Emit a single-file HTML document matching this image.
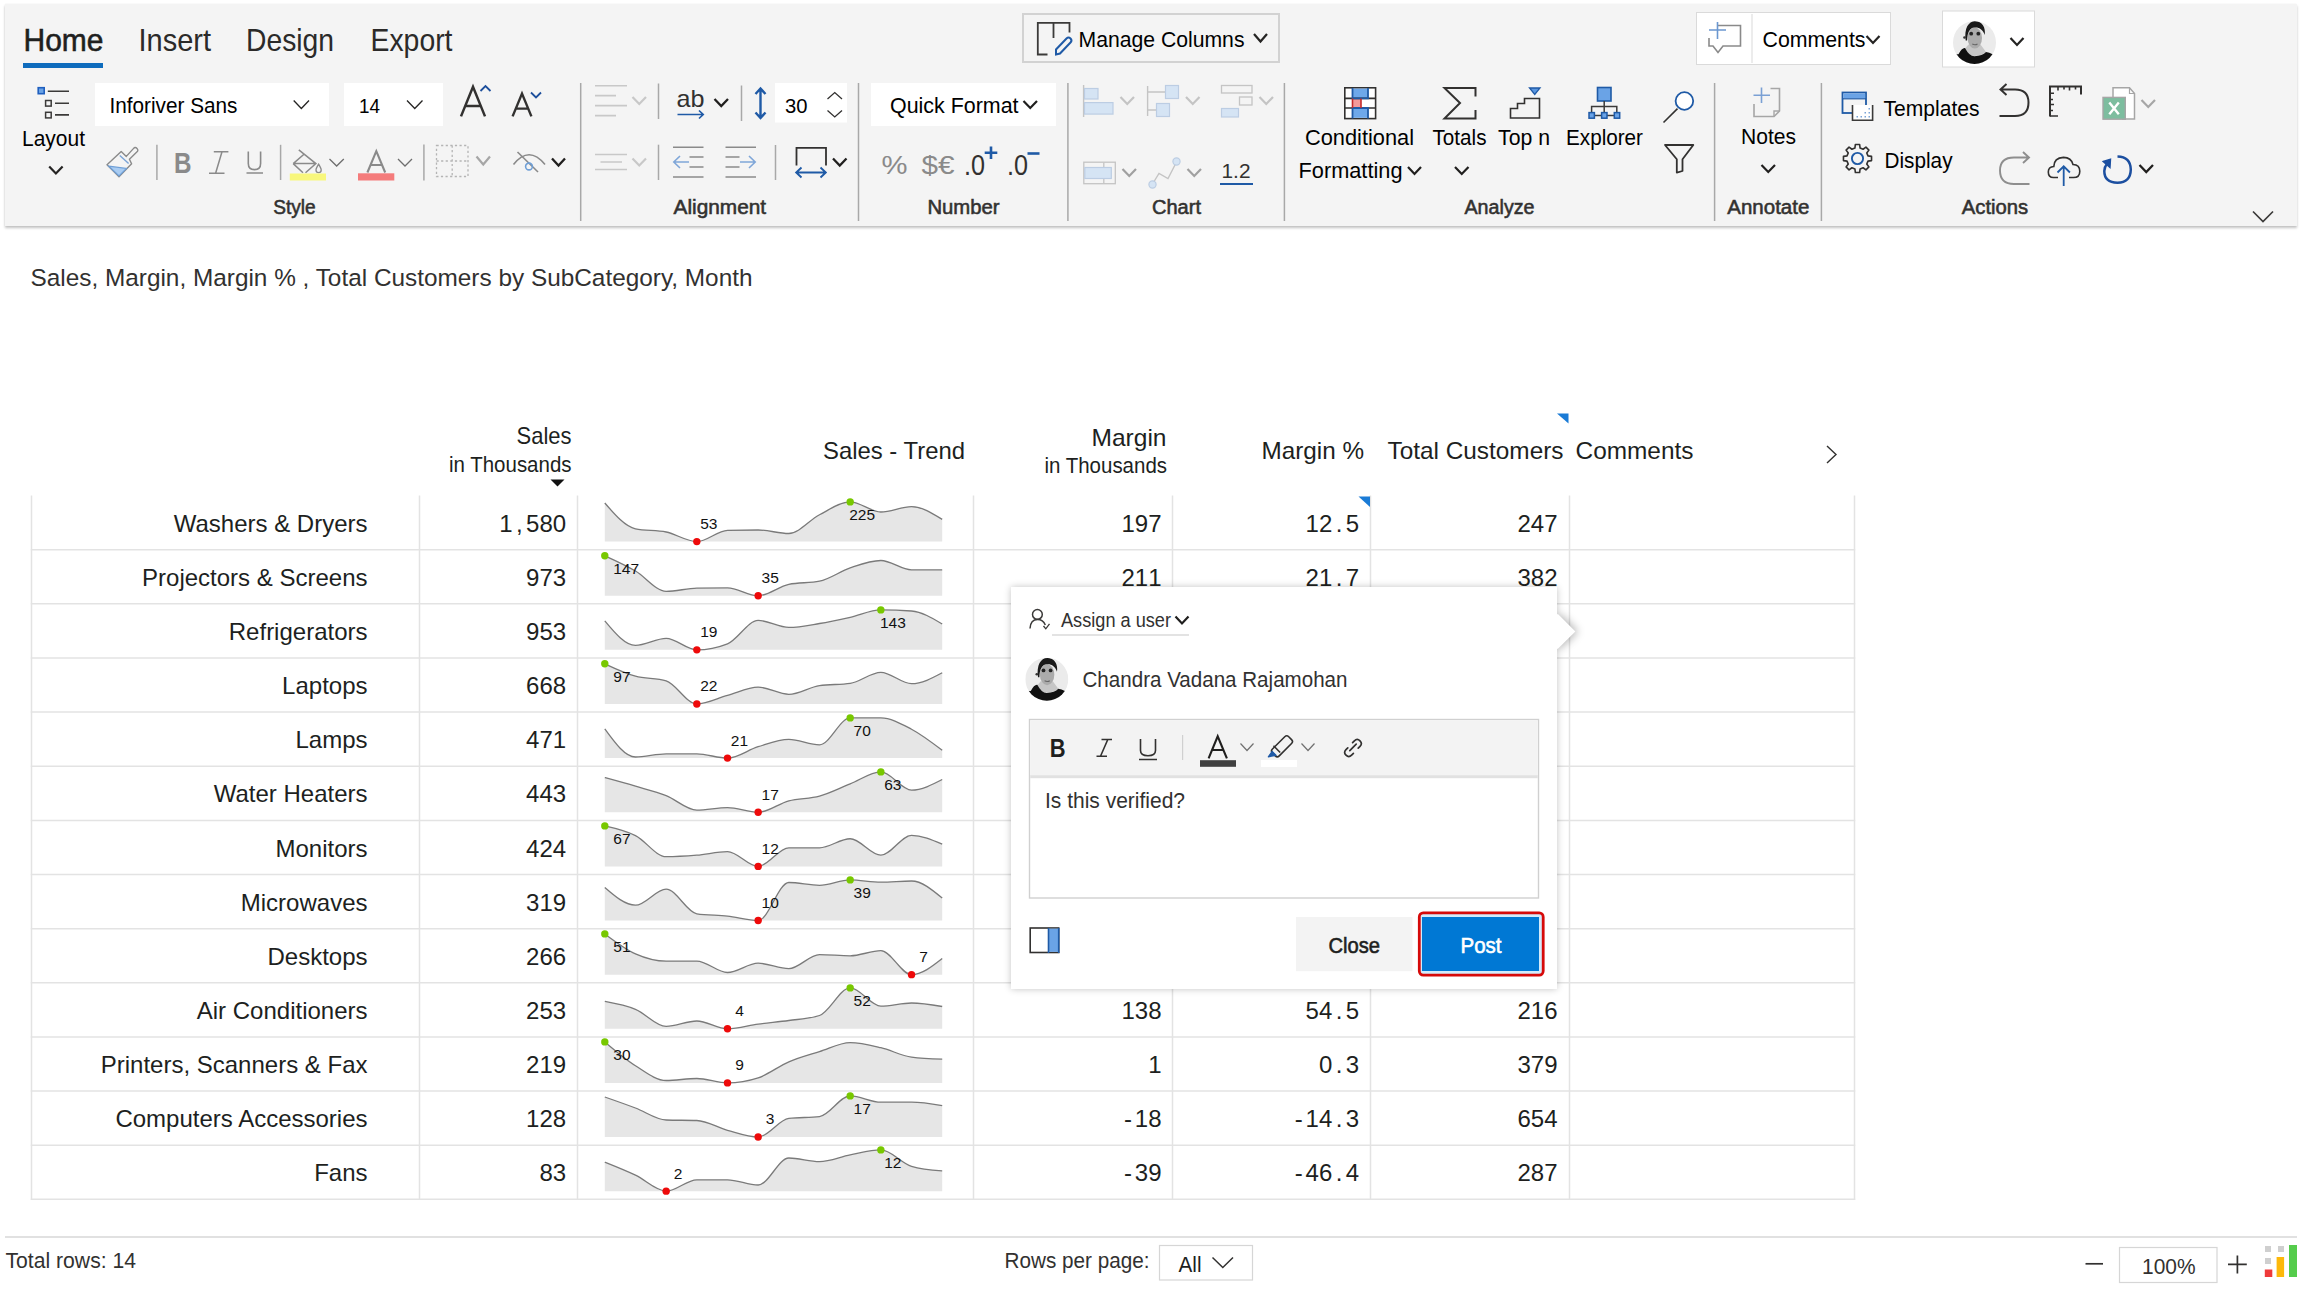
<!DOCTYPE html><html><head><meta charset="utf-8"><title>Inforiver</title><style>
html,body{margin:0;padding:0;background:#fff;width:2304px;height:1292px;overflow:hidden}
svg{position:absolute;left:0;top:0;overflow:visible}
text{font-family:"Liberation Sans",sans-serif}
text.m{font-family:"Liberation Mono",monospace}
.rib{position:absolute;left:5px;top:4px;width:2292px;height:222px;background:#f4f4f4;box-shadow:0 1.5px 2.5px rgba(0,0,0,0.24),-0.5px 0 1.5px rgba(0,0,0,0.07)}
.pop{position:absolute;left:1011px;top:586.5px;width:546px;height:402.5px;background:#fff;box-shadow:0 0 7px rgba(0,0,0,0.24)}
.arrw{position:absolute;left:1557px;top:596px;width:40px;height:72px;overflow:hidden}.arr{position:absolute;left:-11.9px;top:23px;width:25.4px;height:25.4px;background:#fff;transform:rotate(45deg);box-shadow:2px -2px 8px rgba(0,0,0,0.28)}
.lbl{paint-order:stroke;stroke:rgba(255,255,255,0.55);stroke-width:1.5px}
</style></head><body>
<div class="rib"></div>
<svg width="2304" height="1292" viewBox="0 0 2304 1292">
<text class="s" x="23.5" y="51.4" font-size="30.5" fill="#201f1e" textLength="80" lengthAdjust="spacingAndGlyphs" stroke="#201f1e" stroke-width="0.55">Home</text>
<rect x="23" y="63" width="80" height="5" fill="#0f6cbd"/>
<text class="s" x="138.5" y="51.4" font-size="30.5" fill="#2b2a29" textLength="72.5" lengthAdjust="spacingAndGlyphs">Insert</text>
<text class="s" x="246" y="51.4" font-size="30.5" fill="#2b2a29" textLength="88" lengthAdjust="spacingAndGlyphs">Design</text>
<text class="s" x="370.5" y="51.4" font-size="30.5" fill="#2b2a29" textLength="82" lengthAdjust="spacingAndGlyphs">Export</text>
<rect x="1023" y="14" width="256" height="48" fill="none" stroke="#d2d2d2" stroke-width="2"/>
<path d="M1047.5 54.5H1037.8V22.8H1069.5V32.5M1053.5 22.8V38" fill="none" stroke="#3b3a39" stroke-width="1.8"/>
<path d="M1056 54.5L1056 49.5L1066.5 38.5Q1068.5 36.5 1070.5 38.5Q1072.5 40.5 1070.5 42.5L1060 53.5Z" fill="none" stroke="#1f5aa6" stroke-width="2"/>
<text class="s" x="1078.5" y="46.5" font-size="21.5" textLength="166" lengthAdjust="spacingAndGlyphs">Manage Columns</text>
<path d="M1254 34L1260.5 41.5L1267 34" fill="none" stroke="#252423" stroke-width="2.2"/>
<rect x="1696.5" y="12.5" width="194" height="52" fill="#fff" stroke="#dadada" stroke-width="1"/>
<line x1="1752" y1="14" x2="1752" y2="63" stroke="#e0e0e0" stroke-width="1.2"/>
<path d="M1718 25.5H1740.5V46H1723L1718 52.5L1713 46H1709V38" fill="none" stroke="#8a8a8a" stroke-width="1.6"/>
<path d="M1709 30H1726M1717.5 22V39" fill="none" stroke="#6b97d0" stroke-width="1.6"/>
<text class="s" x="1762.5" y="47" font-size="21.5" textLength="103" lengthAdjust="spacingAndGlyphs">Comments</text>
<path d="M1866.5 36L1873.0 43L1879.5 36" fill="none" stroke="#252423" stroke-width="2.2"/>
<rect x="1942.5" y="11" width="92" height="56" fill="#fff" stroke="#dadada" stroke-width="1"/>
<clipPath id="av1"><circle cx="1974.5" cy="42.5" r="21.5"/></clipPath>
<g clip-path="url(#av1)">
<rect x="1953.0" y="21.0" width="43.0" height="43.0" fill="#ebebeb"/>
<path d="M1965.00 48.50Q1969.50 56.50 1974.50 56.00Q1982.50 55.50 1986.00 52.00L1980.50 44.50L1968.50 44.50Z" fill="#c6c6c6"/>
<path d="M1950.50 54.50L1958.50 54.20Q1962.00 47.50 1965.00 48.00Q1969.50 56.50 1974.50 56.30Q1982.50 55.70 1986.00 52.00Q1989.50 52.50 1992.00 54.00L1998.50 56.50L1998.50 72.50L1950.50 72.50Z" fill="#101010"/>
<ellipse cx="1974.80" cy="38.00" rx="7.20" ry="10.50" fill="#ababab"/>
<path d="M1965.70 40.50C1964.00 28.50 1968.50 21.30 1975.00 21.30C1982.00 21.30 1986.00 27.50 1984.70 35.00C1983.00 29.50 1979.00 27.00 1974.50 27.50C1969.50 28.00 1967.30 32.50 1967.10 40.50Z" fill="#1a1a1a"/>
<circle cx="1971.20" cy="33.70" r="1.90" fill="#242424"/>
<circle cx="1978.30" cy="33.70" r="1.90" fill="#242424"/>
<circle cx="1964.50" cy="37.50" r="1.30" fill="#333"/>
<path d="M1972.30 44.00Q1975.00 45.50 1977.50 44.00" fill="none" stroke="#666" stroke-width="1.10"/>
</g>
<path d="M2010.5 38L2017.0 45L2023.5 38" fill="none" stroke="#252423" stroke-width="2.2"/>
<line x1="580.7" y1="83" x2="580.7" y2="221" stroke="#a8a8a8" stroke-width="1.5"/>
<line x1="858.5" y1="83" x2="858.5" y2="221" stroke="#a8a8a8" stroke-width="1.5"/>
<line x1="1067.9" y1="83" x2="1067.9" y2="221" stroke="#a8a8a8" stroke-width="1.5"/>
<line x1="1284.4" y1="83" x2="1284.4" y2="221" stroke="#a8a8a8" stroke-width="1.5"/>
<line x1="1714.6" y1="83" x2="1714.6" y2="221" stroke="#a8a8a8" stroke-width="1.5"/>
<line x1="1821.4" y1="83" x2="1821.4" y2="221" stroke="#a8a8a8" stroke-width="1.5"/>
<text class="s" x="294.5" y="214.1" font-size="20" fill="#323130" text-anchor="middle" textLength="42.5" lengthAdjust="spacingAndGlyphs" stroke="#323130" stroke-width="0.55">Style</text>
<text class="s" x="719.8" y="214.1" font-size="20" fill="#323130" text-anchor="middle" textLength="92.5" lengthAdjust="spacingAndGlyphs" stroke="#323130" stroke-width="0.55">Alignment</text>
<text class="s" x="963.5" y="214.1" font-size="20" fill="#323130" text-anchor="middle" textLength="72.2" lengthAdjust="spacingAndGlyphs" stroke="#323130" stroke-width="0.55">Number</text>
<text class="s" x="1176.5" y="214.1" font-size="20" fill="#323130" text-anchor="middle" textLength="49" lengthAdjust="spacingAndGlyphs" stroke="#323130" stroke-width="0.55">Chart</text>
<text class="s" x="1499.5" y="214.1" font-size="20" fill="#323130" text-anchor="middle" textLength="70" lengthAdjust="spacingAndGlyphs" stroke="#323130" stroke-width="0.55">Analyze</text>
<text class="s" x="1768.3" y="214.1" font-size="20" fill="#323130" text-anchor="middle" textLength="82" lengthAdjust="spacingAndGlyphs" stroke="#323130" stroke-width="0.55">Annotate</text>
<text class="s" x="1995" y="214.1" font-size="20" fill="#323130" text-anchor="middle" textLength="66.4" lengthAdjust="spacingAndGlyphs" stroke="#323130" stroke-width="0.55">Actions</text>
<path d="M2253 211.5L2263.0 221.5L2273 211.5" fill="none" stroke="#3b3a39" stroke-width="1.7"/>
<rect x="38.2" y="87.7" width="6" height="6" fill="#6aa3e6" stroke="#1f5fbf" stroke-width="1.6"/>
<path d="M47.8 91.2H69M55 103.2H69M55 114.9H69" stroke="#3b3a39" stroke-width="1.6"/>
<rect x="45.6" y="100.5" width="5.6" height="5.6" fill="none" stroke="#3b3a39" stroke-width="1.5"/>
<rect x="45.6" y="112.3" width="5.6" height="5.6" fill="none" stroke="#3b3a39" stroke-width="1.5"/>
<text class="s" x="22" y="145.5" font-size="21.5" textLength="63" lengthAdjust="spacingAndGlyphs">Layout</text>
<path d="M49.2 166.5L55.900000000000006 173.5L62.6 166.5" fill="none" stroke="#252423" stroke-width="2.2"/>
<rect x="95" y="83" width="234" height="43" fill="#fff"/>
<text class="s" x="109.5" y="112.7" font-size="21.5" textLength="128" lengthAdjust="spacingAndGlyphs">Inforiver Sans</text>
<path d="M293.7 100.5L301.35 108.5L309 100.5" fill="none" stroke="#252423" stroke-width="1.3"/>
<rect x="344" y="83" width="99" height="43" fill="#fff"/>
<text class="s" x="359" y="113" font-size="20.5" textLength="21" lengthAdjust="spacingAndGlyphs">14</text>
<path d="M407 100.5L414.75 108.5L422.5 100.5" fill="none" stroke="#252423" stroke-width="1.3"/>
<path d="M461 116.4L473 86.8L485 116.4M465.3 106H480.7" fill="none" stroke="#323130" stroke-width="2.5"/>
<path d="M480.5 91L485.5 86L490.5 91" fill="none" stroke="#1d4f9c" stroke-width="1.8"/>
<path d="M512.6 116.4L522 93.6L531.4 116.4M515.8 108.6H528.2" fill="none" stroke="#323130" stroke-width="2.4"/>
<path d="M531 92.5L536 97.5L541 92.5" fill="none" stroke="#1d4f9c" stroke-width="1.8"/>
<path d="M107 164.8L121.2 151.6L126.3 156.4L133.4 148.6Q135.2 146.6 137 148.4Q138.8 150.2 136.8 152L129.4 159.2L131.6 163.8L119 176.8Z" fill="none" stroke="#8a8a8a" stroke-width="1.4" stroke-linejoin="round"/>
<path d="M108.8 166.2L126.5 168.4L119 176Z" fill="#a9ccf2" stroke="#6f9fd6" stroke-width="1.2"/>
<path d="M119.8 155.4L128.6 163.6" stroke="#7aa3d6" stroke-width="1.4"/>
<line x1="156.9" y1="144.8" x2="156.9" y2="180" stroke="#a8a8a8" stroke-width="1.5"/>
<text class="s" x="174" y="173" font-size="29.5" fill="#8a8a8a" font-weight="700" textLength="17.5" lengthAdjust="spacingAndGlyphs">B</text>
<path d="M213.8 151.8H228.4M209 173.2H224.5M222 151.8L215.6 173.2" fill="none" stroke="#8a8a8a" stroke-width="1.5"/>
<path d="M248.3 151.5V163.5Q248.3 169.6 254.5 169.6Q260.6 169.6 260.6 163.5V151.5M246.5 173H263" fill="none" stroke="#8a8a8a" stroke-width="1.6"/>
<line x1="280.6" y1="144.8" x2="280.6" y2="180" stroke="#a8a8a8" stroke-width="1.5"/>
<path d="M298.8 149.8L315.9 163.6L305.5 172.8M293.2 163.6L304 154.2M293.2 163.6L303 172.8M293.4 163.6H315.5" fill="none" stroke="#8a8a8a" stroke-width="1.5"/>
<path d="M318.6 164.2Q316 168.5 316 170Q316 172.6 318.6 172.6Q321.2 172.6 321.2 170Q321.2 168.5 318.6 164.2Z" fill="none" stroke="#8a8a8a" stroke-width="1.3"/>
<rect x="289.8" y="173.5" width="36.2" height="7" fill="#f8f77c"/>
<path d="M329.5 159L336.65 166L343.8 159" fill="none" stroke="#6e6e6e" stroke-width="1.3"/>
<path d="M367.4 172.5L376.3 151.2L385.2 172.5M370.6 165H382" fill="none" stroke="#8a8a8a" stroke-width="2.1"/>
<rect x="358" y="173.3" width="36.3" height="7.2" fill="#f47b7b"/>
<path d="M398 159L405.0 166L412 159" fill="none" stroke="#6e6e6e" stroke-width="1.3"/>
<line x1="423.9" y1="144.6" x2="423.9" y2="180.4" stroke="#a8a8a8" stroke-width="1.5"/>
<path d="M436.5 145.5H468V176.5H436.5ZM452.2 145.5V176.5M436.5 161H468" fill="none" stroke="#b4b4b4" stroke-width="1.3" stroke-dasharray="2.2 2.4"/>
<path d="M476.5 156.5L483.25 164.5L490 156.5" fill="none" stroke="#a6a6a6" stroke-width="2.2"/>
<path d="M513.5 164.5Q529 145 545 164.5" fill="none" stroke="#8a8a8a" stroke-width="1.6"/>
<path d="M517.5 152L538 172" stroke="#8a8a8a" stroke-width="1.6"/>
<circle cx="529" cy="166.5" r="3.4" fill="none" stroke="#6f9fd6" stroke-width="1.6"/>
<path d="M552 158.5L558.5 165.5L565 158.5" fill="none" stroke="#201f1e" stroke-width="2.3"/>
<path d="M595 85.8H627M595 95.6H616M595 105.6H627M595 115.6H616" stroke="#c8c8c8" stroke-width="1.6"/>
<path d="M632.5 97L639.25 104L646 97" fill="none" stroke="#c8c8c8" stroke-width="2.2"/>
<line x1="658.5" y1="83.5" x2="658.5" y2="119" stroke="#a8a8a8" stroke-width="1.5"/>
<text class="s" x="676.5" y="107" font-size="24" fill="#323130" textLength="28" lengthAdjust="spacingAndGlyphs">ab</text>
<path d="M677.5 114.5H703M699 110.5L703.2 114.5L699 118.5" fill="none" stroke="#1f5aa6" stroke-width="1.7"/>
<path d="M714.5 99L721.25 106L728 99" fill="none" stroke="#201f1e" stroke-width="2.3"/>
<line x1="741.5" y1="85.5" x2="741.5" y2="121" stroke="#a8a8a8" stroke-width="1.5"/>
<path d="M760.5 89V117.5M755.5 94L760.5 88.5L765.5 94M755.5 112.5L760.5 118L765.5 112.5" fill="none" stroke="#1f5aa6" stroke-width="2.4"/>
<rect x="775" y="83" width="72" height="39.5" fill="#fff"/>
<text class="s" x="785" y="112.5" font-size="20.5" textLength="22.5" lengthAdjust="spacingAndGlyphs">30</text>
<path d="M827.5 99L834.75 92.5L842 99" fill="none" stroke="#323130" stroke-width="1.3"/>
<path d="M827.5 110.5L834.75 117L842 110.5" fill="none" stroke="#323130" stroke-width="1.3"/>
<path d="M595 154.5H627M600.5 162H622M595 169.5H627" stroke="#c8c8c8" stroke-width="1.6"/>
<path d="M632.5 158.5L639.25 165.5L646 158.5" fill="none" stroke="#c8c8c8" stroke-width="2.2"/>
<line x1="658.5" y1="144.7" x2="658.5" y2="180" stroke="#a8a8a8" stroke-width="1.5"/>
<path d="M673 147.3H703.5M689.5 157H703.5M689.5 167H703.5M673 177H703.5" stroke="#8a8a8a" stroke-width="1.6"/>
<path d="M674 162H689M680 156L673.8 162L680 168" fill="none" stroke="#7fa6d8" stroke-width="1.6"/>
<path d="M725.5 147.3H756M725.5 157H739.5M725.5 167H739.5M725.5 177H756" stroke="#8a8a8a" stroke-width="1.6"/>
<path d="M740 162H755M749 156L755.2 162L749 168" fill="none" stroke="#7fa6d8" stroke-width="1.6"/>
<line x1="775.5" y1="145" x2="775.5" y2="180" stroke="#a8a8a8" stroke-width="1.5"/>
<path d="M796.5 165.5V147.8H826V165.5" fill="none" stroke="#323130" stroke-width="1.8"/>
<path d="M796.5 172.5H825.5M801.5 167.5L796.2 172.5L801.5 177.5M820.5 167.5L825.8 172.5L820.5 177.5" fill="none" stroke="#1f5aa6" stroke-width="1.9"/>
<path d="M833 158.5L839.75 165.5L846.5 158.5" fill="none" stroke="#201f1e" stroke-width="2.3"/>
<rect x="871" y="83" width="185" height="43" fill="#fff"/>
<text class="s" x="890" y="113.3" font-size="21.5" textLength="128.5" lengthAdjust="spacingAndGlyphs">Quick Format</text>
<path d="M1023.5 101L1030.25 108L1037 101" fill="none" stroke="#201f1e" stroke-width="2.2"/>
<text class="s" x="881.5" y="174" font-size="25" fill="#8a8a8a" textLength="26" lengthAdjust="spacingAndGlyphs">%</text>
<text class="s" x="921.5" y="174" font-size="26" fill="#8a8a8a" textLength="33" lengthAdjust="spacingAndGlyphs">$€</text>
<text class="s" x="964" y="175" font-size="29" fill="#323130" textLength="21" lengthAdjust="spacingAndGlyphs">.0</text>
<path d="M991 146.5V159M984.7 152.7H997.3" stroke="#1f5aa6" stroke-width="2.6"/>
<text class="s" x="1007" y="175" font-size="29" fill="#323130" textLength="21" lengthAdjust="spacingAndGlyphs">.0</text>
<path d="M1027.5 153.5H1039.5" stroke="#1f5aa6" stroke-width="2.6"/>
<path d="M1083.6 85V117" stroke="#c4c4c4" stroke-width="1.4"/>
<rect x="1084.5" y="88.5" width="13.5" height="10.5" fill="#d5e4f4" stroke="#bccde3" stroke-width="1.2"/>
<rect x="1084.5" y="102.6" width="28.5" height="11.5" fill="#d5e4f4" stroke="#bccde3" stroke-width="1.2"/>
<path d="M1120.5 97L1127.25 104L1134 97" fill="none" stroke="#c4c4c4" stroke-width="2.2"/>
<path d="M1147.6 86V116M1147.6 92H1165M1147.6 110H1156" fill="none" stroke="#c4c4c4" stroke-width="1.4"/>
<rect x="1165.5" y="85.5" width="13" height="13" fill="#d5e4f4" stroke="#bccde3" stroke-width="1.2"/>
<rect x="1156.5" y="103.5" width="13" height="13" fill="#d5e4f4" stroke="#bccde3" stroke-width="1.2"/>
<path d="M1186 97L1192.75 104L1199.5 97" fill="none" stroke="#c4c4c4" stroke-width="2.2"/>
<rect x="1221.5" y="85.5" width="30.5" height="7.5" fill="none" stroke="#c4c4c4" stroke-width="1.3"/>
<rect x="1239.5" y="97" width="12.5" height="8" fill="none" stroke="#c4c4c4" stroke-width="1.3"/>
<rect x="1221.5" y="108.5" width="17" height="8.5" fill="#d5e4f4" stroke="#bccde3" stroke-width="1.2"/>
<path d="M1259.5 97L1266.25 104L1273 97" fill="none" stroke="#c4c4c4" stroke-width="2.2"/>
<rect x="1083.8" y="162.2" width="31.5" height="21.5" fill="none" stroke="#c4c4c4" stroke-width="1.3"/>
<path d="M1103.8 162.5V183.5" stroke="#c4c4c4" stroke-width="1.3"/>
<rect x="1084.8" y="167.5" width="26.5" height="11" fill="#d5e4f4" stroke="#bccde3" stroke-width="1.2"/>
<path d="M1122.5 169L1129.25 176L1136 169" fill="none" stroke="#a0a0a0" stroke-width="2.2"/>
<path d="M1152.5 184L1159 173.5L1168 178.5L1176.5 162" fill="none" stroke="#c4c4c4" stroke-width="1.4"/>
<circle cx="1152.5" cy="184.5" r="3.6" fill="#d5e4f4" stroke="#bccde3" stroke-width="1.2"/>
<circle cx="1176.5" cy="161.5" r="3.6" fill="#d5e4f4" stroke="#bccde3" stroke-width="1.2"/>
<path d="M1187.5 169L1194.25 176L1201 169" fill="none" stroke="#a0a0a0" stroke-width="2.2"/>
<text class="s" x="1221.5" y="177.5" font-size="20" fill="#323130" textLength="29" lengthAdjust="spacingAndGlyphs">1.2</text>
<rect x="1220" y="183" width="33" height="2" fill="#1f5aa6"/>
<rect x="1344.8" y="87.8" width="30.8" height="30.8" fill="#fff" stroke="#323130" stroke-width="1.6"/>
<rect x="1352.5" y="88.6" width="15.5" height="9.8" fill="#6ea8ea"/>
<rect x="1352.5" y="108" width="15.5" height="9.8" fill="#6ea8ea"/>
<rect x="1352.5" y="98.5" width="8.5" height="9.5" fill="#f49a9a"/>
<path d="M1345 98.4H1375.6M1345 108H1375.6" stroke="#323130" stroke-width="1.6"/>
<path d="M1352.5 88V98.4H1368V88M1352.5 118.6V108H1368V118.6" fill="none" stroke="#1f5aa6" stroke-width="1.8"/>
<path d="M1361 98.4V108M1352.5 98.4V108" stroke="#c42b2b" stroke-width="1.6"/>
<text class="s" x="1305" y="145.3" font-size="21.5" textLength="109" lengthAdjust="spacingAndGlyphs">Conditional</text>
<text class="s" x="1298.5" y="177.8" font-size="21.5" textLength="104" lengthAdjust="spacingAndGlyphs">Formatting</text>
<path d="M1408 167L1414.5 174L1421 167" fill="none" stroke="#201f1e" stroke-width="2.2"/>
<path d="M1475.5 96.5V88H1444.5L1460 103L1444.5 118.5H1475.5V110" fill="none" stroke="#323130" stroke-width="2"/>
<text class="s" x="1432.5" y="145.3" font-size="21.5" textLength="54" lengthAdjust="spacingAndGlyphs">Totals</text>
<path d="M1455 167L1461.75 174L1468.5 167" fill="none" stroke="#201f1e" stroke-width="2.2"/>
<path d="M1510.5 118V108.5H1517.5V103.5H1524.5V98.5H1539.5V118Z" fill="none" stroke="#323130" stroke-width="1.6"/>
<path d="M1529.5 88H1540L1534.75 94.5Z" fill="#5a96df" stroke="#1f5aa6" stroke-width="1.3"/>
<text class="s" x="1498" y="145.3" font-size="21.5" textLength="52" lengthAdjust="spacingAndGlyphs">Top n</text>
<rect x="1597.5" y="87.5" width="13.5" height="13.5" fill="#6aa3e6" stroke="#1f5aa6" stroke-width="1.6"/>
<path d="M1604.2 101V115.5M1591.6 115.5V106.4H1616.8V115.5M1591 115.6H1617" fill="none" stroke="#3b3a39" stroke-width="1.5"/>
<rect x="1589" y="112.6" width="5.4" height="5.6" fill="#6aa3e6" stroke="#1f5aa6" stroke-width="1.5"/>
<rect x="1601.6" y="112.6" width="5.4" height="5.6" fill="#6aa3e6" stroke="#1f5aa6" stroke-width="1.5"/>
<rect x="1614.3" y="112.6" width="5.4" height="5.6" fill="#6aa3e6" stroke="#1f5aa6" stroke-width="1.5"/>
<text class="s" x="1566" y="145.3" font-size="21.5" textLength="77" lengthAdjust="spacingAndGlyphs">Explorer</text>
<circle cx="1684.4" cy="101" r="8.8" fill="#fff" stroke="#1f5aa6" stroke-width="1.8"/>
<path d="M1663.5 122.5L1677.5 108.6" stroke="#323130" stroke-width="1.6"/>
<path d="M1665 145H1693.3L1682.5 159.3V171L1676.8 172.6V159.3Z" fill="none" stroke="#323130" stroke-width="1.8" stroke-linejoin="round"/>
<path d="M1770.5 88.5H1779.5V111L1774 116.5H1754V104" fill="none" stroke="#a6a6a6" stroke-width="1.6"/>
<path d="M1774 116.5V111H1779.5" fill="none" stroke="#a6a6a6" stroke-width="1.4"/>
<path d="M1753.5 95.2H1770M1761.5 87.5V103" stroke="#7aa0d4" stroke-width="1.6"/>
<text class="s" x="1741" y="143.8" font-size="21.5" textLength="55" lengthAdjust="spacingAndGlyphs">Notes</text>
<path d="M1761.5 165L1768.25 172L1775 165" fill="none" stroke="#201f1e" stroke-width="2.2"/>
<rect x="1842.5" y="92.5" width="23.5" height="20.5" fill="none" stroke="#1f5aa6" stroke-width="1.8"/>
<rect x="1843.4" y="93.4" width="21.8" height="5" fill="#6aa3e6"/>
<path d="M1843 98.8H1866" stroke="#1f5aa6" stroke-width="1.2"/>
<path d="M1852.5 105V120.2H1872.6V105" fill="#fff" stroke="#3b3a39" stroke-width="1.6"/>
<rect x="1868.5" y="108" width="1.5" height="1.5" fill="#7aa3d6"/>
<rect x="1864.5" y="112" width="1.5" height="1.5" fill="#7aa3d6"/>
<rect x="1868.5" y="112" width="1.5" height="1.5" fill="#7aa3d6"/>
<rect x="1856.5" y="116" width="1.5" height="1.5" fill="#7aa3d6"/>
<rect x="1860.5" y="116" width="1.5" height="1.5" fill="#7aa3d6"/>
<rect x="1864.5" y="116" width="1.5" height="1.5" fill="#7aa3d6"/>
<rect x="1868.5" y="116" width="1.5" height="1.5" fill="#7aa3d6"/>
<text class="s" x="1883.5" y="115.6" font-size="21.5" textLength="96" lengthAdjust="spacingAndGlyphs">Templates</text>
<path d="M1855.39 144.46L1859.61 144.46L1860.10 148.02L1863.07 149.25L1865.94 147.08L1868.92 150.06L1866.75 152.93L1867.98 155.90L1871.54 156.39L1871.54 160.61L1867.98 161.10L1866.75 164.07L1868.92 166.94L1865.94 169.92L1863.07 167.75L1860.10 168.98L1859.61 172.54L1855.39 172.54L1854.90 168.98L1851.93 167.75L1849.06 169.92L1846.08 166.94L1848.25 164.07L1847.02 161.10L1843.46 160.61L1843.46 156.39L1847.02 155.90L1848.25 152.93L1846.08 150.06L1849.06 147.08L1851.93 149.25L1854.90 148.02Z" fill="none" stroke="#323130" stroke-width="1.6" stroke-linejoin="round"/>
<circle cx="1857.5" cy="158.5" r="5.6" fill="none" stroke="#1f5aa6" stroke-width="1.9"/>
<text class="s" x="1884.5" y="167.7" font-size="21.5" textLength="68" lengthAdjust="spacingAndGlyphs">Display</text>
<path d="M2000 86.5L1999 90L2002 93.5" fill="none" stroke="#323130" stroke-width="0"/>
<path d="M1999.5 116H2015Q2028.5 116 2028.5 102.5Q2028.5 89.5 2015 89.5H2001M2006.5 84L2000.5 89.5L2006.5 95" fill="none" stroke="#323130" stroke-width="2"/>
<path d="M2050 116.5V86.5H2081V94.5" fill="none" stroke="#323130" stroke-width="2"/>
<path d="M2058 86.5V90.5M2064 86.5V89.5M2069.5 86.5V90.5M2075.5 86.5V89.5M2050 93.2H2054M2050 99.5H2053M2050 104.5H2054M2050 110.5H2053M2050 116H2058" stroke="#323130" stroke-width="1.6"/>
<path d="M2113 97V87.8H2129.5L2134.5 93.5V119H2122" fill="#fff" stroke="#a6a6a6" stroke-width="1.5"/>
<path d="M2129.5 88V93.5H2134.5" fill="none" stroke="#a6a6a6" stroke-width="1.2"/>
<rect x="2103" y="97.4" width="22.3" height="21.8" fill="#7dbd9f" stroke="#a6a6a6" stroke-width="1.4"/>
<path d="M2109.3 102.5L2118.8 114.2M2118.8 102.5L2109.3 114.2" stroke="#fff" stroke-width="2.4"/>
<path d="M2141.5 100L2148.25 107L2155 100" fill="none" stroke="#a6a6a6" stroke-width="2.2"/>
<path d="M2029.5 184H2014Q2000 184 2000 170.5Q2000 157.5 2014 157.5H2028.5M2023 152L2029 157.5L2023 163" fill="none" stroke="#8e8e8e" stroke-width="1.9"/>
<path d="M2058 177.5H2053.5Q2048.3 177.5 2048.3 172Q2048.3 166.8 2053.8 166.5Q2054 158 2063.5 157.4Q2071.3 157.6 2073 164.5Q2079.8 164.8 2079.8 171.2Q2079.8 177.5 2073.5 177.5H2069" fill="none" stroke="#323130" stroke-width="1.6"/>
<path d="M2063.7 186V166.5M2057.5 172.5L2063.7 166.3L2069.9 172.5" fill="none" stroke="#1f5aa6" stroke-width="1.8"/>
<path d="M2107.5 163Q2104.3 167 2104.3 171Q2104.3 182.5 2117.5 182.8Q2130.5 182.5 2130.8 169.5Q2130.5 156.7 2117.5 156.4" fill="none" stroke="#1c4fa0" stroke-width="2.5"/>
<path d="M2103.2 161.5L2110.5 159.3L2110 167.5Z" fill="#1c4fa0" stroke="#1c4fa0" stroke-width="1.4"/>
<path d="M2139.5 165L2146.25 172L2153 165" fill="none" stroke="#201f1e" stroke-width="2.3"/>
<text class="s" x="30.5" y="286.4" font-size="24.5" fill="#323130" textLength="722" lengthAdjust="spacingAndGlyphs">Sales, Margin, Margin % , Total Customers by SubCategory, Month</text>
<text class="s" x="571.5" y="444" font-size="24" fill="#201f1e" text-anchor="end" textLength="55" lengthAdjust="spacingAndGlyphs">Sales</text>
<text class="s" x="571.5" y="472.4" font-size="21.5" fill="#201f1e" text-anchor="end" textLength="122.5" lengthAdjust="spacingAndGlyphs">in Thousands</text>
<path d="M550.5 479.4H564.5L557.5 486.5Z" fill="#111"/>
<text class="s" x="965" y="459" font-size="24" fill="#201f1e" text-anchor="end" textLength="142" lengthAdjust="spacingAndGlyphs">Sales - Trend</text>
<text class="s" x="1166.5" y="446" font-size="24" fill="#201f1e" text-anchor="end" textLength="75" lengthAdjust="spacingAndGlyphs">Margin</text>
<text class="s" x="1167" y="473.3" font-size="21.5" fill="#201f1e" text-anchor="end" textLength="122.5" lengthAdjust="spacingAndGlyphs">in Thousands</text>
<text class="s" x="1364" y="459" font-size="24" fill="#201f1e" text-anchor="end" textLength="102.5" lengthAdjust="spacingAndGlyphs">Margin %</text>
<text class="s" x="1563.5" y="459" font-size="24" fill="#201f1e" text-anchor="end" textLength="176" lengthAdjust="spacingAndGlyphs">Total Customers</text>
<text class="s" x="1575.5" y="459" font-size="24" fill="#201f1e" textLength="118" lengthAdjust="spacingAndGlyphs">Comments</text>
<path d="M1827 446L1836 454.5L1827 463" fill="none" stroke="#323130" stroke-width="1.4"/>
<path d="M1557 413.5H1568.5V423.5Z" fill="#1a7bd6"/>
<line x1="31.5" y1="495.6" x2="31.5" y2="1199.99" stroke="#e3e3e3" stroke-width="1.5"/>
<line x1="419.5" y1="495.6" x2="419.5" y2="1199.99" stroke="#e3e3e3" stroke-width="1.5"/>
<line x1="577.5" y1="495.6" x2="577.5" y2="1199.99" stroke="#e3e3e3" stroke-width="1.5"/>
<line x1="973.5" y1="495.6" x2="973.5" y2="1199.99" stroke="#e3e3e3" stroke-width="1.5"/>
<line x1="1172.5" y1="495.6" x2="1172.5" y2="1199.99" stroke="#e3e3e3" stroke-width="1.5"/>
<line x1="1370.5" y1="495.6" x2="1370.5" y2="1199.99" stroke="#e3e3e3" stroke-width="1.5"/>
<line x1="1569.5" y1="495.6" x2="1569.5" y2="1199.99" stroke="#e3e3e3" stroke-width="1.5"/>
<line x1="1854.5" y1="495.6" x2="1854.5" y2="1199.99" stroke="#e3e3e3" stroke-width="1.5"/>
<line x1="30.75" y1="549.73" x2="1855.25" y2="549.73" stroke="#e3e3e3" stroke-width="1.5"/>
<line x1="30.75" y1="603.86" x2="1855.25" y2="603.86" stroke="#e3e3e3" stroke-width="1.5"/>
<line x1="30.75" y1="657.99" x2="1855.25" y2="657.99" stroke="#e3e3e3" stroke-width="1.5"/>
<line x1="30.75" y1="712.12" x2="1855.25" y2="712.12" stroke="#e3e3e3" stroke-width="1.5"/>
<line x1="30.75" y1="766.25" x2="1855.25" y2="766.25" stroke="#e3e3e3" stroke-width="1.5"/>
<line x1="30.75" y1="820.38" x2="1855.25" y2="820.38" stroke="#e3e3e3" stroke-width="1.5"/>
<line x1="30.75" y1="874.51" x2="1855.25" y2="874.51" stroke="#e3e3e3" stroke-width="1.5"/>
<line x1="30.75" y1="928.64" x2="1855.25" y2="928.64" stroke="#e3e3e3" stroke-width="1.5"/>
<line x1="30.75" y1="982.77" x2="1855.25" y2="982.77" stroke="#e3e3e3" stroke-width="1.5"/>
<line x1="30.75" y1="1036.90" x2="1855.25" y2="1036.90" stroke="#e3e3e3" stroke-width="1.5"/>
<line x1="30.75" y1="1091.03" x2="1855.25" y2="1091.03" stroke="#e3e3e3" stroke-width="1.5"/>
<line x1="30.75" y1="1145.16" x2="1855.25" y2="1145.16" stroke="#e3e3e3" stroke-width="1.5"/>
<line x1="30.75" y1="1199.29" x2="1855.25" y2="1199.29" stroke="#e3e3e3" stroke-width="1.5"/>
<text class="s" x="367.5" y="531.8" font-size="24" fill="#201f1e" text-anchor="end">Washers &amp; Dryers</text>
<text class="s" x="505.90 519.30 532.70 546.10 559.50" y="531.8" font-size="24" fill="#201f1e" text-anchor="middle">1,580</text>
<text class="s" x="1128.10 1141.50 1154.90" y="531.8" font-size="24" fill="#201f1e" text-anchor="middle">197</text>
<text class="s" x="1312.20 1325.60 1339.00 1352.40" y="531.8" font-size="24" fill="#201f1e" text-anchor="middle">12.5</text>
<text class="s" x="1524.10 1537.50 1550.90" y="531.8" font-size="24" fill="#201f1e" text-anchor="middle">247</text>
<path d="M604.80 503.00C615.02 514.83 625.25 526.67 635.47 528.80C645.70 530.93 655.92 529.87 666.15 532.00C676.37 534.13 686.59 541.60 696.82 541.60C707.04 541.60 717.27 530.67 727.49 530.40C737.72 530.13 747.94 530.00 758.16 530.00C768.39 530.00 778.61 533.50 788.84 533.50C799.06 533.50 809.28 520.02 819.51 514.75C829.73 509.48 839.96 501.90 850.18 501.90C860.41 501.90 870.63 512.00 880.85 512.00C891.08 512.00 901.30 506.60 911.53 506.60C921.75 506.60 931.98 513.00 942.20 519.40L942.20 541.6L604.80 541.6Z" fill="#e6e6e6"/>
<path d="M604.80 503.00C615.02 514.83 625.25 526.67 635.47 528.80C645.70 530.93 655.92 529.87 666.15 532.00C676.37 534.13 686.59 541.60 696.82 541.60C707.04 541.60 717.27 530.67 727.49 530.40C737.72 530.13 747.94 530.00 758.16 530.00C768.39 530.00 778.61 533.50 788.84 533.50C799.06 533.50 809.28 520.02 819.51 514.75C829.73 509.48 839.96 501.90 850.18 501.90C860.41 501.90 870.63 512.00 880.85 512.00C891.08 512.00 901.30 506.60 911.53 506.60C921.75 506.60 931.98 513.00 942.20 519.40" fill="none" stroke="#7a7a7a" stroke-width="1.3"/>
<circle cx="850.18" cy="501.90" r="3.7" fill="#78c800"/>
<circle cx="696.82" cy="541.60" r="3.7" fill="#ee0a0a"/>
<text class="s" x="862.18" y="520.2" font-size="15.5" fill="#111" text-anchor="middle" class="lbl">225</text>
<text class="s" x="708.82" y="529.0" font-size="15.5" fill="#111" text-anchor="middle" class="lbl">53</text>
<text class="s" x="367.5" y="585.93" font-size="24" fill="#201f1e" text-anchor="end">Projectors &amp; Screens</text>
<text class="s" x="532.70 546.10 559.50" y="585.93" font-size="24" fill="#201f1e" text-anchor="middle">973</text>
<text class="s" x="1128.10 1141.50 1154.90" y="585.93" font-size="24" fill="#201f1e" text-anchor="middle">211</text>
<text class="s" x="1312.20 1325.60 1339.00 1352.40" y="585.93" font-size="24" fill="#201f1e" text-anchor="middle">21.7</text>
<text class="s" x="1524.10 1537.50 1550.90" y="585.93" font-size="24" fill="#201f1e" text-anchor="middle">382</text>
<path d="M604.80 555.80C615.02 560.44 625.25 565.08 635.47 571.00C645.70 576.92 655.92 591.30 666.15 591.30C676.37 591.30 686.59 588.40 696.82 588.20C707.04 588.00 717.27 587.90 727.49 587.90C737.72 587.90 747.94 595.73 758.16 595.73C768.39 595.73 778.61 586.37 788.84 584.30C799.06 582.23 809.28 583.27 819.51 581.20C829.73 579.13 839.96 571.35 850.18 567.90C860.41 564.45 870.63 560.50 880.85 560.50C891.08 560.50 901.30 569.80 911.53 569.80C921.75 569.80 931.98 569.80 942.20 569.80L942.20 595.73L604.80 595.73Z" fill="#e6e6e6"/>
<path d="M604.80 555.80C615.02 560.44 625.25 565.08 635.47 571.00C645.70 576.92 655.92 591.30 666.15 591.30C676.37 591.30 686.59 588.40 696.82 588.20C707.04 588.00 717.27 587.90 727.49 587.90C737.72 587.90 747.94 595.73 758.16 595.73C768.39 595.73 778.61 586.37 788.84 584.30C799.06 582.23 809.28 583.27 819.51 581.20C829.73 579.13 839.96 571.35 850.18 567.90C860.41 564.45 870.63 560.50 880.85 560.50C891.08 560.50 901.30 569.80 911.53 569.80C921.75 569.80 931.98 569.80 942.20 569.80" fill="none" stroke="#7a7a7a" stroke-width="1.3"/>
<circle cx="604.80" cy="555.80" r="3.7" fill="#78c800"/>
<circle cx="758.16" cy="595.73" r="3.7" fill="#ee0a0a"/>
<text class="s" x="626.1" y="574.1" font-size="15.5" fill="#111" text-anchor="middle" class="lbl">147</text>
<text class="s" x="770.16" y="583.13" font-size="15.5" fill="#111" text-anchor="middle" class="lbl">35</text>
<text class="s" x="367.5" y="640.06" font-size="24" fill="#201f1e" text-anchor="end">Refrigerators</text>
<text class="s" x="532.70 546.10 559.50" y="640.06" font-size="24" fill="#201f1e" text-anchor="middle">953</text>
<path d="M604.80 620.90C615.02 633.15 625.25 645.40 635.47 645.40C645.70 645.40 655.92 638.40 666.15 638.40C676.37 638.40 686.59 649.86 696.82 649.86C707.04 649.86 717.27 647.84 727.49 643.80C737.72 639.76 747.94 620.40 758.16 620.40C768.39 620.40 778.61 627.40 788.84 627.40C799.06 627.40 809.28 625.18 819.51 623.50C829.73 621.82 839.96 619.57 850.18 617.30C860.41 615.03 870.63 609.90 880.85 609.90C891.08 609.90 901.30 610.27 911.53 611.00C921.75 611.73 931.98 617.87 942.20 624.00L942.20 649.86L604.80 649.86Z" fill="#e6e6e6"/>
<path d="M604.80 620.90C615.02 633.15 625.25 645.40 635.47 645.40C645.70 645.40 655.92 638.40 666.15 638.40C676.37 638.40 686.59 649.86 696.82 649.86C707.04 649.86 717.27 647.84 727.49 643.80C737.72 639.76 747.94 620.40 758.16 620.40C768.39 620.40 778.61 627.40 788.84 627.40C799.06 627.40 809.28 625.18 819.51 623.50C829.73 621.82 839.96 619.57 850.18 617.30C860.41 615.03 870.63 609.90 880.85 609.90C891.08 609.90 901.30 610.27 911.53 611.00C921.75 611.73 931.98 617.87 942.20 624.00" fill="none" stroke="#7a7a7a" stroke-width="1.3"/>
<circle cx="880.85" cy="609.90" r="3.7" fill="#78c800"/>
<circle cx="696.82" cy="649.86" r="3.7" fill="#ee0a0a"/>
<text class="s" x="892.85" y="628.2" font-size="15.5" fill="#111" text-anchor="middle" class="lbl">143</text>
<text class="s" x="708.82" y="637.26" font-size="15.5" fill="#111" text-anchor="middle" class="lbl">19</text>
<text class="s" x="367.5" y="694.19" font-size="24" fill="#201f1e" text-anchor="end">Laptops</text>
<text class="s" x="532.70 546.10 559.50" y="694.19" font-size="24" fill="#201f1e" text-anchor="middle">668</text>
<path d="M604.80 663.80C615.02 668.58 625.25 673.35 635.47 676.20C645.70 679.05 655.92 677.77 666.15 680.90C676.37 684.03 686.59 703.99 696.82 703.99C707.04 703.99 717.27 698.22 727.49 695.40C737.72 692.59 747.94 687.10 758.16 687.10C768.39 687.10 778.61 694.30 788.84 694.30C799.06 694.30 809.28 687.07 819.51 685.60C829.73 684.13 839.96 684.87 850.18 683.40C860.41 681.93 870.63 672.40 880.85 672.40C891.08 672.40 901.30 683.70 911.53 683.70C921.75 683.70 931.98 678.25 942.20 672.80L942.20 703.99L604.80 703.99Z" fill="#e6e6e6"/>
<path d="M604.80 663.80C615.02 668.58 625.25 673.35 635.47 676.20C645.70 679.05 655.92 677.77 666.15 680.90C676.37 684.03 686.59 703.99 696.82 703.99C707.04 703.99 717.27 698.22 727.49 695.40C737.72 692.59 747.94 687.10 758.16 687.10C768.39 687.10 778.61 694.30 788.84 694.30C799.06 694.30 809.28 687.07 819.51 685.60C829.73 684.13 839.96 684.87 850.18 683.40C860.41 681.93 870.63 672.40 880.85 672.40C891.08 672.40 901.30 683.70 911.53 683.70C921.75 683.70 931.98 678.25 942.20 672.80" fill="none" stroke="#7a7a7a" stroke-width="1.3"/>
<circle cx="604.80" cy="663.80" r="3.7" fill="#78c800"/>
<circle cx="696.82" cy="703.99" r="3.7" fill="#ee0a0a"/>
<text class="s" x="621.9" y="682.1" font-size="15.5" fill="#111" text-anchor="middle" class="lbl">97</text>
<text class="s" x="708.82" y="691.39" font-size="15.5" fill="#111" text-anchor="middle" class="lbl">22</text>
<text class="s" x="367.5" y="748.32" font-size="24" fill="#201f1e" text-anchor="end">Lamps</text>
<text class="s" x="532.70 546.10 559.50" y="748.32" font-size="24" fill="#201f1e" text-anchor="middle">471</text>
<path d="M604.80 728.90C615.02 742.95 625.25 757.00 635.47 757.00C645.70 757.00 655.92 753.90 666.15 753.90C676.37 753.90 686.59 753.90 696.82 753.90C707.04 753.90 717.27 758.12 727.49 758.12C737.72 758.12 747.94 749.84 758.16 746.70C768.39 743.56 778.61 739.30 788.84 739.30C799.06 739.30 809.28 744.80 819.51 744.80C829.73 744.80 839.96 717.90 850.18 717.90C860.41 717.90 870.63 717.90 880.85 717.90C891.08 717.90 901.30 723.80 911.53 729.20C921.75 734.60 931.98 742.45 942.20 750.30L942.20 758.12L604.80 758.12Z" fill="#e6e6e6"/>
<path d="M604.80 728.90C615.02 742.95 625.25 757.00 635.47 757.00C645.70 757.00 655.92 753.90 666.15 753.90C676.37 753.90 686.59 753.90 696.82 753.90C707.04 753.90 717.27 758.12 727.49 758.12C737.72 758.12 747.94 749.84 758.16 746.70C768.39 743.56 778.61 739.30 788.84 739.30C799.06 739.30 809.28 744.80 819.51 744.80C829.73 744.80 839.96 717.90 850.18 717.90C860.41 717.90 870.63 717.90 880.85 717.90C891.08 717.90 901.30 723.80 911.53 729.20C921.75 734.60 931.98 742.45 942.20 750.30" fill="none" stroke="#7a7a7a" stroke-width="1.3"/>
<circle cx="850.18" cy="717.90" r="3.7" fill="#78c800"/>
<circle cx="727.49" cy="758.12" r="3.7" fill="#ee0a0a"/>
<text class="s" x="862.18" y="736.2" font-size="15.5" fill="#111" text-anchor="middle" class="lbl">70</text>
<text class="s" x="739.49" y="745.52" font-size="15.5" fill="#111" text-anchor="middle" class="lbl">21</text>
<text class="s" x="367.5" y="802.45" font-size="24" fill="#201f1e" text-anchor="end">Water Heaters</text>
<text class="s" x="532.70 546.10 559.50" y="802.45" font-size="24" fill="#201f1e" text-anchor="middle">443</text>
<path d="M604.80 777.60C615.02 780.40 625.25 783.20 635.47 786.20C645.70 789.20 655.92 791.62 666.15 795.60C676.37 799.58 686.59 810.10 696.82 810.10C707.04 810.10 717.27 807.60 727.49 807.60C737.72 807.60 747.94 812.25 758.16 812.25C768.39 812.25 778.61 803.49 788.84 800.80C799.06 798.11 809.28 798.92 819.51 796.10C829.73 793.28 839.96 787.93 850.18 783.90C860.41 779.87 870.63 771.90 880.85 771.90C891.08 771.90 901.30 790.10 911.53 790.10C921.75 790.10 931.98 784.80 942.20 779.50L942.20 812.25L604.80 812.25Z" fill="#e6e6e6"/>
<path d="M604.80 777.60C615.02 780.40 625.25 783.20 635.47 786.20C645.70 789.20 655.92 791.62 666.15 795.60C676.37 799.58 686.59 810.10 696.82 810.10C707.04 810.10 717.27 807.60 727.49 807.60C737.72 807.60 747.94 812.25 758.16 812.25C768.39 812.25 778.61 803.49 788.84 800.80C799.06 798.11 809.28 798.92 819.51 796.10C829.73 793.28 839.96 787.93 850.18 783.90C860.41 779.87 870.63 771.90 880.85 771.90C891.08 771.90 901.30 790.10 911.53 790.10C921.75 790.10 931.98 784.80 942.20 779.50" fill="none" stroke="#7a7a7a" stroke-width="1.3"/>
<circle cx="880.85" cy="771.90" r="3.7" fill="#78c800"/>
<circle cx="758.16" cy="812.25" r="3.7" fill="#ee0a0a"/>
<text class="s" x="892.85" y="790.2" font-size="15.5" fill="#111" text-anchor="middle" class="lbl">63</text>
<text class="s" x="770.16" y="799.65" font-size="15.5" fill="#111" text-anchor="middle" class="lbl">17</text>
<text class="s" x="367.5" y="856.58" font-size="24" fill="#201f1e" text-anchor="end">Monitors</text>
<text class="s" x="532.70 546.10 559.50" y="856.58" font-size="24" fill="#201f1e" text-anchor="middle">424</text>
<path d="M604.80 825.90C615.02 828.18 625.25 830.47 635.47 835.60C645.70 840.73 655.92 856.70 666.15 856.70C676.37 856.70 686.59 856.05 696.82 855.20C707.04 854.35 717.27 851.60 727.49 851.60C737.72 851.60 747.94 866.38 758.16 866.38C768.39 866.38 778.61 847.80 788.84 847.80C799.06 847.80 809.28 847.80 819.51 847.80C829.73 847.80 839.96 838.75 850.18 838.75C860.41 838.75 870.63 855.20 880.85 855.20C891.08 855.20 901.30 835.30 911.53 835.30C921.75 835.30 931.98 839.75 942.20 844.20L942.20 866.3800000000001L604.80 866.3800000000001Z" fill="#e6e6e6"/>
<path d="M604.80 825.90C615.02 828.18 625.25 830.47 635.47 835.60C645.70 840.73 655.92 856.70 666.15 856.70C676.37 856.70 686.59 856.05 696.82 855.20C707.04 854.35 717.27 851.60 727.49 851.60C737.72 851.60 747.94 866.38 758.16 866.38C768.39 866.38 778.61 847.80 788.84 847.80C799.06 847.80 809.28 847.80 819.51 847.80C829.73 847.80 839.96 838.75 850.18 838.75C860.41 838.75 870.63 855.20 880.85 855.20C891.08 855.20 901.30 835.30 911.53 835.30C921.75 835.30 931.98 839.75 942.20 844.20" fill="none" stroke="#7a7a7a" stroke-width="1.3"/>
<circle cx="604.80" cy="825.90" r="3.7" fill="#78c800"/>
<circle cx="758.16" cy="866.38" r="3.7" fill="#ee0a0a"/>
<text class="s" x="621.9" y="844.2" font-size="15.5" fill="#111" text-anchor="middle" class="lbl">67</text>
<text class="s" x="770.16" y="853.78" font-size="15.5" fill="#111" text-anchor="middle" class="lbl">12</text>
<text class="s" x="367.5" y="910.71" font-size="24" fill="#201f1e" text-anchor="end">Microwaves</text>
<text class="s" x="532.70 546.10 559.50" y="910.71" font-size="24" fill="#201f1e" text-anchor="middle">319</text>
<path d="M604.80 887.50C615.02 896.35 625.25 905.20 635.47 905.20C645.70 905.20 655.92 889.10 666.15 889.10C676.37 889.10 686.59 912.27 696.82 913.80C707.04 915.33 717.27 914.98 727.49 916.10C737.72 917.22 747.94 920.51 758.16 920.51C768.39 920.51 778.61 882.50 788.84 882.50C799.06 882.50 809.28 885.30 819.51 885.30C829.73 885.30 839.96 879.90 850.18 879.90C860.41 879.90 870.63 882.20 880.85 882.20C891.08 882.20 901.30 881.00 911.53 881.00C921.75 881.00 931.98 889.55 942.20 898.10L942.20 920.51L604.80 920.51Z" fill="#e6e6e6"/>
<path d="M604.80 887.50C615.02 896.35 625.25 905.20 635.47 905.20C645.70 905.20 655.92 889.10 666.15 889.10C676.37 889.10 686.59 912.27 696.82 913.80C707.04 915.33 717.27 914.98 727.49 916.10C737.72 917.22 747.94 920.51 758.16 920.51C768.39 920.51 778.61 882.50 788.84 882.50C799.06 882.50 809.28 885.30 819.51 885.30C829.73 885.30 839.96 879.90 850.18 879.90C860.41 879.90 870.63 882.20 880.85 882.20C891.08 882.20 901.30 881.00 911.53 881.00C921.75 881.00 931.98 889.55 942.20 898.10" fill="none" stroke="#7a7a7a" stroke-width="1.3"/>
<circle cx="850.18" cy="879.90" r="3.7" fill="#78c800"/>
<circle cx="758.16" cy="920.51" r="3.7" fill="#ee0a0a"/>
<text class="s" x="862.18" y="898.2" font-size="15.5" fill="#111" text-anchor="middle" class="lbl">39</text>
<text class="s" x="770.16" y="907.91" font-size="15.5" fill="#111" text-anchor="middle" class="lbl">10</text>
<text class="s" x="367.5" y="964.84" font-size="24" fill="#201f1e" text-anchor="end">Desktops</text>
<text class="s" x="532.70 546.10 559.50" y="964.84" font-size="24" fill="#201f1e" text-anchor="middle">266</text>
<path d="M604.80 933.90C615.02 941.58 625.25 949.27 635.47 953.80C645.70 958.33 655.92 961.10 666.15 961.10C676.37 961.10 686.59 961.10 696.82 961.10C707.04 961.10 717.27 972.50 727.49 972.50C737.72 972.50 747.94 963.20 758.16 963.20C768.39 963.20 778.61 968.60 788.84 968.60C799.06 968.60 809.28 954.60 819.51 954.60C829.73 954.60 839.96 955.80 850.18 955.80C860.41 955.80 870.63 950.70 880.85 950.70C891.08 950.70 901.30 974.64 911.53 974.64C921.75 974.64 931.98 966.57 942.20 958.50L942.20 974.6400000000001L604.80 974.6400000000001Z" fill="#e6e6e6"/>
<path d="M604.80 933.90C615.02 941.58 625.25 949.27 635.47 953.80C645.70 958.33 655.92 961.10 666.15 961.10C676.37 961.10 686.59 961.10 696.82 961.10C707.04 961.10 717.27 972.50 727.49 972.50C737.72 972.50 747.94 963.20 758.16 963.20C768.39 963.20 778.61 968.60 788.84 968.60C799.06 968.60 809.28 954.60 819.51 954.60C829.73 954.60 839.96 955.80 850.18 955.80C860.41 955.80 870.63 950.70 880.85 950.70C891.08 950.70 901.30 974.64 911.53 974.64C921.75 974.64 931.98 966.57 942.20 958.50" fill="none" stroke="#7a7a7a" stroke-width="1.3"/>
<circle cx="604.80" cy="933.90" r="3.7" fill="#78c800"/>
<circle cx="911.53" cy="974.64" r="3.7" fill="#ee0a0a"/>
<text class="s" x="621.9" y="952.2" font-size="15.5" fill="#111" text-anchor="middle" class="lbl">51</text>
<text class="s" x="923.53" y="962.04" font-size="15.5" fill="#111" text-anchor="middle" class="lbl">7</text>
<text class="s" x="367.5" y="1018.97" font-size="24" fill="#201f1e" text-anchor="end">Air Conditioners</text>
<text class="s" x="532.70 546.10 559.50" y="1018.97" font-size="24" fill="#201f1e" text-anchor="middle">253</text>
<text class="s" x="1128.10 1141.50 1154.90" y="1018.97" font-size="24" fill="#201f1e" text-anchor="middle">138</text>
<text class="s" x="1312.20 1325.60 1339.00 1352.40" y="1018.97" font-size="24" fill="#201f1e" text-anchor="middle">54.5</text>
<text class="s" x="1524.10 1537.50 1550.90" y="1018.97" font-size="24" fill="#201f1e" text-anchor="middle">216</text>
<path d="M604.80 1001.40C615.02 1003.27 625.25 1005.13 635.47 1009.30C645.70 1013.47 655.92 1026.40 666.15 1026.40C676.37 1026.40 686.59 1021.00 696.82 1021.00C707.04 1021.00 717.27 1028.77 727.49 1028.77C737.72 1028.77 747.94 1025.48 758.16 1024.10C768.39 1022.72 778.61 1021.93 788.84 1020.50C799.06 1019.07 809.28 1018.83 819.51 1015.50C829.73 1012.17 839.96 987.90 850.18 987.90C860.41 987.90 870.63 1006.10 880.85 1006.10C891.08 1006.10 901.30 1003.00 911.53 1003.00C921.75 1003.00 931.98 1004.75 942.20 1006.50L942.20 1028.77L604.80 1028.77Z" fill="#e6e6e6"/>
<path d="M604.80 1001.40C615.02 1003.27 625.25 1005.13 635.47 1009.30C645.70 1013.47 655.92 1026.40 666.15 1026.40C676.37 1026.40 686.59 1021.00 696.82 1021.00C707.04 1021.00 717.27 1028.77 727.49 1028.77C737.72 1028.77 747.94 1025.48 758.16 1024.10C768.39 1022.72 778.61 1021.93 788.84 1020.50C799.06 1019.07 809.28 1018.83 819.51 1015.50C829.73 1012.17 839.96 987.90 850.18 987.90C860.41 987.90 870.63 1006.10 880.85 1006.10C891.08 1006.10 901.30 1003.00 911.53 1003.00C921.75 1003.00 931.98 1004.75 942.20 1006.50" fill="none" stroke="#7a7a7a" stroke-width="1.3"/>
<circle cx="850.18" cy="987.90" r="3.7" fill="#78c800"/>
<circle cx="727.49" cy="1028.77" r="3.7" fill="#ee0a0a"/>
<text class="s" x="862.18" y="1006.2" font-size="15.5" fill="#111" text-anchor="middle" class="lbl">52</text>
<text class="s" x="739.49" y="1016.17" font-size="15.5" fill="#111" text-anchor="middle" class="lbl">4</text>
<text class="s" x="367.5" y="1073.1" font-size="24" fill="#201f1e" text-anchor="end">Printers, Scanners &amp; Fax</text>
<text class="s" x="532.70 546.10 559.50" y="1073.1" font-size="24" fill="#201f1e" text-anchor="middle">219</text>
<text class="s" x="1154.90" y="1073.1" font-size="24" fill="#201f1e" text-anchor="middle">1</text>
<text class="s" x="1325.60 1339.00 1352.40" y="1073.1" font-size="24" fill="#201f1e" text-anchor="middle">0.3</text>
<text class="s" x="1524.10 1537.50 1550.90" y="1073.1" font-size="24" fill="#201f1e" text-anchor="middle">379</text>
<path d="M604.80 1041.90C615.02 1050.58 625.25 1059.27 635.47 1065.70C645.70 1072.13 655.92 1080.50 666.15 1080.50C676.37 1080.50 686.59 1078.50 696.82 1078.50C707.04 1078.50 717.27 1082.90 727.49 1082.90C737.72 1082.90 747.94 1081.23 758.16 1077.90C768.39 1074.57 778.61 1066.18 788.84 1061.80C799.06 1057.42 809.28 1054.80 819.51 1051.60C829.73 1048.40 839.96 1042.60 850.18 1042.60C860.41 1042.60 870.63 1045.28 880.85 1047.70C891.08 1050.12 901.30 1055.77 911.53 1057.10C921.75 1058.43 931.98 1058.77 942.20 1059.10L942.20 1082.9L604.80 1082.9Z" fill="#e6e6e6"/>
<path d="M604.80 1041.90C615.02 1050.58 625.25 1059.27 635.47 1065.70C645.70 1072.13 655.92 1080.50 666.15 1080.50C676.37 1080.50 686.59 1078.50 696.82 1078.50C707.04 1078.50 717.27 1082.90 727.49 1082.90C737.72 1082.90 747.94 1081.23 758.16 1077.90C768.39 1074.57 778.61 1066.18 788.84 1061.80C799.06 1057.42 809.28 1054.80 819.51 1051.60C829.73 1048.40 839.96 1042.60 850.18 1042.60C860.41 1042.60 870.63 1045.28 880.85 1047.70C891.08 1050.12 901.30 1055.77 911.53 1057.10C921.75 1058.43 931.98 1058.77 942.20 1059.10" fill="none" stroke="#7a7a7a" stroke-width="1.3"/>
<circle cx="604.80" cy="1041.90" r="3.7" fill="#78c800"/>
<circle cx="727.49" cy="1082.90" r="3.7" fill="#ee0a0a"/>
<text class="s" x="621.9" y="1060.2" font-size="15.5" fill="#111" text-anchor="middle" class="lbl">30</text>
<text class="s" x="739.49" y="1070.3" font-size="15.5" fill="#111" text-anchor="middle" class="lbl">9</text>
<text class="s" x="367.5" y="1127.23" font-size="24" fill="#201f1e" text-anchor="end">Computers Accessories</text>
<text class="s" x="532.70 546.10 559.50" y="1127.23" font-size="24" fill="#201f1e" text-anchor="middle">128</text>
<text class="s" x="1128.10 1141.50 1154.90" y="1127.23" font-size="24" fill="#201f1e" text-anchor="middle">-18</text>
<text class="s" x="1298.80 1312.20 1325.60 1339.00 1352.40" y="1127.23" font-size="24" fill="#201f1e" text-anchor="middle">-14.3</text>
<text class="s" x="1524.10 1537.50 1550.90" y="1127.23" font-size="24" fill="#201f1e" text-anchor="middle">654</text>
<path d="M604.80 1097.00C615.02 1100.58 625.25 1104.17 635.47 1108.00C645.70 1111.83 655.92 1119.67 666.15 1120.00C676.37 1120.33 686.59 1120.17 696.82 1120.50C707.04 1120.83 717.27 1127.55 727.49 1130.30C737.72 1133.06 747.94 1137.03 758.16 1137.03C768.39 1137.03 778.61 1119.60 788.84 1118.40C799.06 1117.20 809.28 1117.80 819.51 1116.60C829.73 1115.40 839.96 1095.90 850.18 1095.90C860.41 1095.90 870.63 1102.20 880.85 1102.20C891.08 1102.20 901.30 1102.20 911.53 1102.20C921.75 1102.20 931.98 1103.90 942.20 1105.60L942.20 1137.0300000000002L604.80 1137.0300000000002Z" fill="#e6e6e6"/>
<path d="M604.80 1097.00C615.02 1100.58 625.25 1104.17 635.47 1108.00C645.70 1111.83 655.92 1119.67 666.15 1120.00C676.37 1120.33 686.59 1120.17 696.82 1120.50C707.04 1120.83 717.27 1127.55 727.49 1130.30C737.72 1133.06 747.94 1137.03 758.16 1137.03C768.39 1137.03 778.61 1119.60 788.84 1118.40C799.06 1117.20 809.28 1117.80 819.51 1116.60C829.73 1115.40 839.96 1095.90 850.18 1095.90C860.41 1095.90 870.63 1102.20 880.85 1102.20C891.08 1102.20 901.30 1102.20 911.53 1102.20C921.75 1102.20 931.98 1103.90 942.20 1105.60" fill="none" stroke="#7a7a7a" stroke-width="1.3"/>
<circle cx="850.18" cy="1095.90" r="3.7" fill="#78c800"/>
<circle cx="758.16" cy="1137.03" r="3.7" fill="#ee0a0a"/>
<text class="s" x="862.18" y="1114.2" font-size="15.5" fill="#111" text-anchor="middle" class="lbl">17</text>
<text class="s" x="770.16" y="1124.43" font-size="15.5" fill="#111" text-anchor="middle" class="lbl">3</text>
<text class="s" x="367.5" y="1181.36" font-size="24" fill="#201f1e" text-anchor="end">Fans</text>
<text class="s" x="546.10 559.50" y="1181.36" font-size="24" fill="#201f1e" text-anchor="middle">83</text>
<text class="s" x="1128.10 1141.50 1154.90" y="1181.36" font-size="24" fill="#201f1e" text-anchor="middle">-39</text>
<text class="s" x="1298.80 1312.20 1325.60 1339.00 1352.40" y="1181.36" font-size="24" fill="#201f1e" text-anchor="middle">-46.4</text>
<text class="s" x="1524.10 1537.50 1550.90" y="1181.36" font-size="24" fill="#201f1e" text-anchor="middle">287</text>
<path d="M604.80 1162.20C615.02 1166.29 625.25 1170.37 635.47 1175.20C645.70 1180.03 655.92 1191.16 666.15 1191.16C676.37 1191.16 686.59 1179.80 696.82 1179.80C707.04 1179.80 717.27 1179.80 727.49 1179.80C737.72 1179.80 747.94 1185.00 758.16 1185.00C768.39 1185.00 778.61 1158.00 788.84 1158.00C799.06 1158.00 809.28 1161.60 819.51 1161.60C829.73 1161.60 839.96 1156.85 850.18 1154.90C860.41 1152.95 870.63 1149.90 880.85 1149.90C891.08 1149.90 901.30 1163.23 911.53 1166.30C921.75 1169.37 931.98 1170.13 942.20 1170.90L942.20 1191.16L604.80 1191.16Z" fill="#e6e6e6"/>
<path d="M604.80 1162.20C615.02 1166.29 625.25 1170.37 635.47 1175.20C645.70 1180.03 655.92 1191.16 666.15 1191.16C676.37 1191.16 686.59 1179.80 696.82 1179.80C707.04 1179.80 717.27 1179.80 727.49 1179.80C737.72 1179.80 747.94 1185.00 758.16 1185.00C768.39 1185.00 778.61 1158.00 788.84 1158.00C799.06 1158.00 809.28 1161.60 819.51 1161.60C829.73 1161.60 839.96 1156.85 850.18 1154.90C860.41 1152.95 870.63 1149.90 880.85 1149.90C891.08 1149.90 901.30 1163.23 911.53 1166.30C921.75 1169.37 931.98 1170.13 942.20 1170.90" fill="none" stroke="#7a7a7a" stroke-width="1.3"/>
<circle cx="880.85" cy="1149.90" r="3.7" fill="#78c800"/>
<circle cx="666.15" cy="1191.16" r="3.7" fill="#ee0a0a"/>
<text class="s" x="892.85" y="1168.2" font-size="15.5" fill="#111" text-anchor="middle" class="lbl">12</text>
<text class="s" x="678.15" y="1178.56" font-size="15.5" fill="#111" text-anchor="middle" class="lbl">2</text>
<path d="M1358.5 496.5H1370V507Z" fill="#1a7bd6"/>
<line x1="5" y1="1237" x2="2297" y2="1237" stroke="#e1e1e1" stroke-width="2"/>
<text class="s" x="5.5" y="1268.2" font-size="21.5" fill="#323130" textLength="130.5" lengthAdjust="spacingAndGlyphs">Total rows: 14</text>
<text class="s" x="1004.5" y="1268.4" font-size="21.5" fill="#323130" textLength="145" lengthAdjust="spacingAndGlyphs">Rows per page:</text>
<rect x="1159.5" y="1245.5" width="93" height="34.5" fill="#fff" stroke="#d6d6d6" stroke-width="1.2"/>
<text class="s" x="1178.5" y="1271.6" font-size="22.5" fill="#201f1e" textLength="23" lengthAdjust="spacingAndGlyphs">All</text>
<path d="M1212.5 1257.5L1222.8 1267.5L1233 1257.5" fill="none" stroke="#323130" stroke-width="1.5"/>
<path d="M2085.5 1263.8H2103" stroke="#323130" stroke-width="1.7"/>
<rect x="2119.5" y="1247.5" width="97.5" height="35" fill="#fff" stroke="#d6d6d6" stroke-width="1.2"/>
<text class="s" x="2142" y="1274.2" font-size="22" fill="#323130" textLength="53.5" lengthAdjust="spacingAndGlyphs">100%</text>
<path d="M2228 1264.3H2246.8M2237.4 1255.4V1273.6" stroke="#323130" stroke-width="1.7"/>
<rect x="2265" y="1246" width="6" height="6" fill="#cfcfcf"/>
<rect x="2278" y="1246" width="6" height="6" fill="#cfcfcf"/>
<rect x="2265" y="1258" width="6" height="6" fill="#cfcfcf"/>
<rect x="2264.8" y="1269.5" width="7.5" height="7.5" fill="#ef3a3a"/>
<rect x="2276.6" y="1257" width="7.5" height="20" fill="#fdb80a"/>
<rect x="2289" y="1245" width="8" height="32" fill="#55cc4c"/>
</svg>
<div class="pop"></div><div class="arrw"><div class="arr"></div></div>
<svg width="2304" height="1292" viewBox="0 0 2304 1292" style="pointer-events:none">
<path d="M1030 628.5Q1030.5 619.5 1037.6 619.5Q1043 619.5 1045.3 625" fill="none" stroke="#3b3a39" stroke-width="1.5"/>
<circle cx="1037.4" cy="614.4" r="4.9" fill="none" stroke="#3b3a39" stroke-width="1.5"/>
<path d="M1043.5 626L1045.8 628.8L1049.5 623.8" fill="none" stroke="#3b3a39" stroke-width="1.3"/>
<text class="s" x="1061" y="627.4" font-size="20.5" fill="#323130" textLength="110" lengthAdjust="spacingAndGlyphs">Assign a user</text>
<path d="M1175.5 616.5L1182.0 623.5L1188.5 616.5" fill="none" stroke="#201f1e" stroke-width="2.2"/>
<line x1="1052" y1="635" x2="1189" y2="635" stroke="#c8c8c8" stroke-width="1.2"/>
<clipPath id="av2"><circle cx="1046.8" cy="679.2" r="21.5"/></clipPath>
<g clip-path="url(#av2)">
<rect x="1025.3" y="657.7" width="43.0" height="43.0" fill="#ebebeb"/>
<path d="M1037.30 685.20Q1041.80 693.20 1046.80 692.70Q1054.80 692.20 1058.30 688.70L1052.80 681.20L1040.80 681.20Z" fill="#c6c6c6"/>
<path d="M1022.80 691.20L1030.80 690.90Q1034.30 684.20 1037.30 684.70Q1041.80 693.20 1046.80 693.00Q1054.80 692.40 1058.30 688.70Q1061.80 689.20 1064.30 690.70L1070.80 693.20L1070.80 709.20L1022.80 709.20Z" fill="#101010"/>
<ellipse cx="1047.10" cy="674.70" rx="7.20" ry="10.50" fill="#ababab"/>
<path d="M1038.00 677.20C1036.30 665.20 1040.80 658.00 1047.30 658.00C1054.30 658.00 1058.30 664.20 1057.00 671.70C1055.30 666.20 1051.30 663.70 1046.80 664.20C1041.80 664.70 1039.60 669.20 1039.40 677.20Z" fill="#1a1a1a"/>
<circle cx="1043.50" cy="670.40" r="1.90" fill="#242424"/>
<circle cx="1050.60" cy="670.40" r="1.90" fill="#242424"/>
<circle cx="1036.80" cy="674.20" r="1.30" fill="#333"/>
<path d="M1044.60 680.70Q1047.30 682.20 1049.80 680.70" fill="none" stroke="#666" stroke-width="1.10"/>
</g>
<text class="s" x="1082.5" y="687" font-size="21.5" fill="#323130" textLength="265" lengthAdjust="spacingAndGlyphs">Chandra Vadana Rajamohan</text>
<rect x="1029.8" y="719.5" width="508.5" height="378" fill="none"/>
<rect x="1029.5" y="719.5" width="509" height="178.5" fill="#fff" stroke="#d0d0d0" stroke-width="1.4"/>
<rect x="1030.2" y="720.2" width="507.6" height="55.5" fill="#f3f3f3"/>
<rect x="1030.2" y="775.2" width="507.6" height="3" fill="#e1e1e1"/>
<text class="s" x="1049.8" y="756.5" font-size="25" fill="#201f1e" font-weight="700" textLength="15.8" lengthAdjust="spacingAndGlyphs">B</text>
<path d="M1101.5 739.5H1112M1096.5 756.3H1107M1107.8 739.5L1100.5 756.3" fill="none" stroke="#323130" stroke-width="1.6"/>
<path d="M1140.5 739V750.5Q1140.5 755.7 1148 755.7Q1155.5 755.7 1155.5 750.5V739M1139 759.5H1157" fill="none" stroke="#323130" stroke-width="1.6"/>
<line x1="1182.6" y1="735" x2="1182.6" y2="760" stroke="#d0d0d0" stroke-width="1.2"/>
<path d="M1208.6 758.4L1217.7 736.3L1226.9 758.4M1212.4 750H1223" fill="none" stroke="#201f1e" stroke-width="2.1"/>
<rect x="1200" y="760.2" width="36" height="6.6" fill="#404040"/>
<path d="M1240.5 743.5L1247.0 750.5L1253.5 743.5" fill="none" stroke="#707070" stroke-width="1.2"/>
<rect x="1270.5" y="741.5" width="23" height="9.6" rx="2.8" transform="rotate(-45 1282 746.3)" fill="none" stroke="#323130" stroke-width="1.6"/>
<path d="M1273.5 745.8L1280.2 752.5" stroke="#323130" stroke-width="1.6"/>
<path d="M1268.3 756.8L1272.2 751.3L1276.2 755.3Z" fill="#1f5aa6" stroke="#1f5aa6" stroke-width="1.2" stroke-linejoin="round"/>
<rect x="1261" y="760" width="36" height="7" fill="#fff"/>
<path d="M1301.5 743.5L1308.0 750.5L1314.5 743.5" fill="none" stroke="#707070" stroke-width="1.2"/>
<path d="M1352.6 742.6L1354.4 740.8Q1357.2 738 1360 740.8Q1362.8 743.6 1360 746.4L1358.2 748.2M1353.4 753.4L1351.6 755.2Q1348.8 758 1346 755.2Q1343.2 752.4 1346 749.6L1347.8 747.8M1349.8 750.6L1356.2 744.2" fill="none" stroke="#323130" stroke-width="1.7" stroke-linecap="round"/>
<text class="s" x="1045" y="808" font-size="21.5" fill="#323130" textLength="140" lengthAdjust="spacingAndGlyphs">Is this verified?</text>
<rect x="1030.2" y="928" width="28.5" height="24.5" fill="#fff" stroke="#323130" stroke-width="1.6"/>
<rect x="1048.5" y="928.6" width="9.6" height="23.3" fill="#6aa3e6"/>
<path d="M1048.5 928V953" stroke="#1f5aa6" stroke-width="1.6"/>
<path d="M1058.7 928V953" stroke="#1f5aa6" stroke-width="1.6"/>
<rect x="1296" y="917" width="116.5" height="54.2" fill="#f3f3f3"/>
<text class="s" x="1354.2" y="952.9" font-size="22" fill="#201f1e" text-anchor="middle" textLength="51.5" lengthAdjust="spacingAndGlyphs" stroke="#201f1e" stroke-width="0.6">Close</text>
<rect x="1419.3" y="912.9" width="123.9" height="62.2" rx="4" fill="#d3ebfb" stroke="#d60a0a" stroke-width="2.8"/>
<rect x="1422" y="917" width="117" height="54" fill="#0078d4"/>
<text class="s" x="1481" y="952.9" font-size="22" fill="#ffffff" text-anchor="middle" textLength="41" lengthAdjust="spacingAndGlyphs" stroke="#ffffff" stroke-width="0.6">Post</text>
</svg>
</body></html>
